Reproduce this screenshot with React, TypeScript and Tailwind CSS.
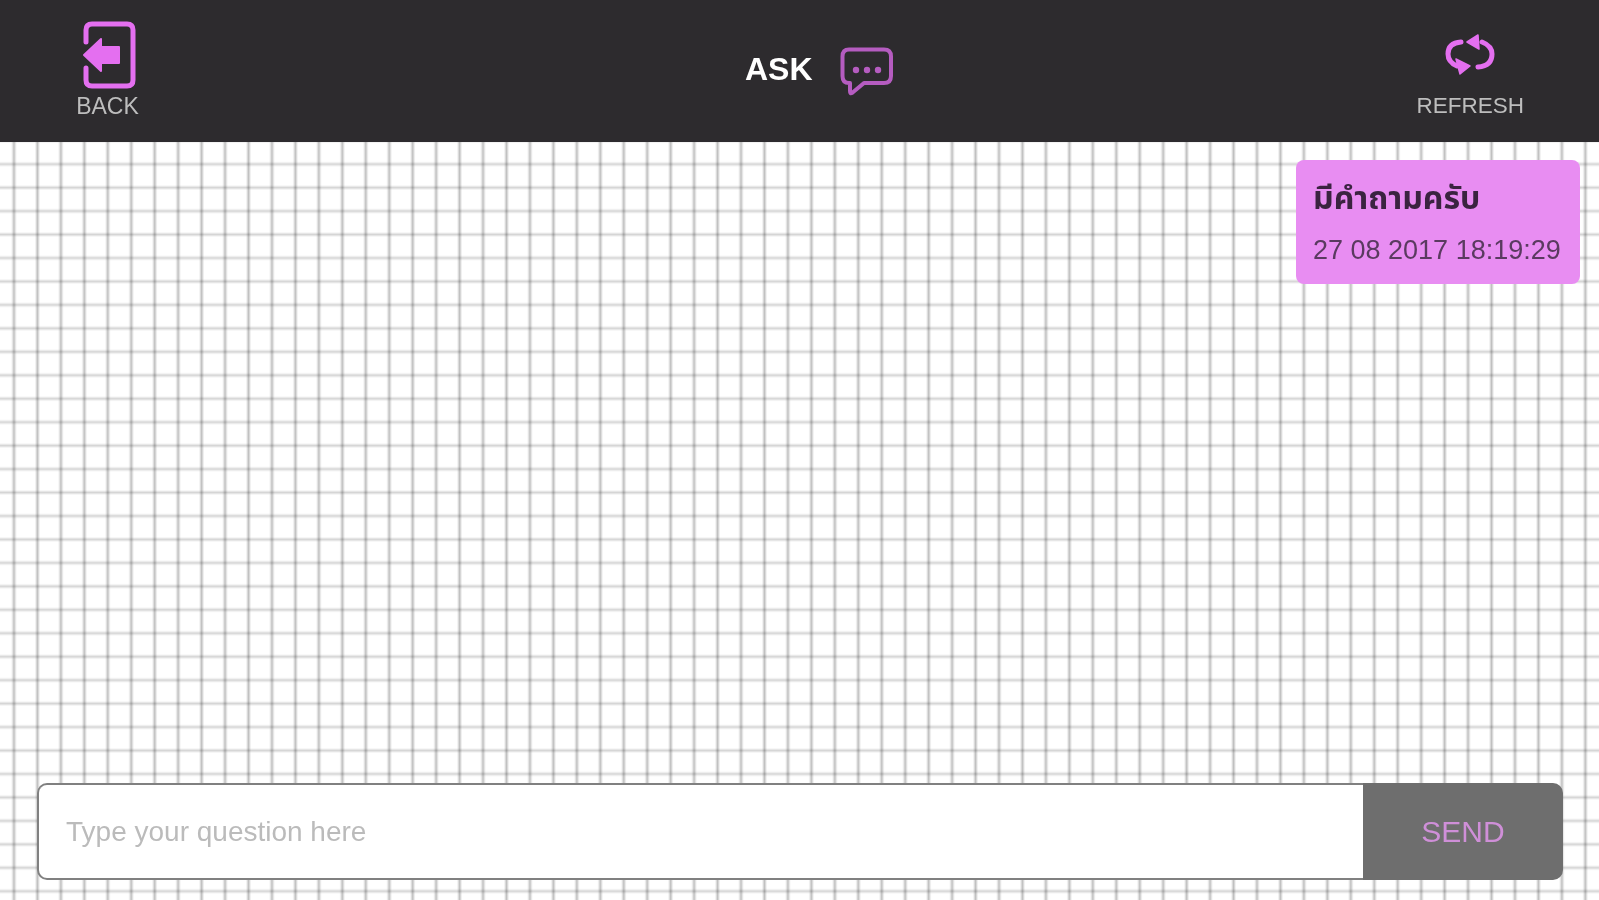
function BackIcon() {
  return (
    <svg width="56" height="70" viewBox="0 0 56 70" fill="none" className="block">
      <path d="M5 22 V10 Q5 4 11 4 H46 Q52 4 52 10 V60 Q52 66 46 66 H11 Q5 66 5 60 V48" stroke="#e46ff0" strokeWidth="5" strokeLinecap="round" />
      <path d="M3 35 L20 19 V27 H38 V43 H20 V51 Z" fill="#e46ff0" stroke="#e46ff0" strokeWidth="2" strokeLinejoin="round" />
    </svg>
  )
}

function ChatIcon() {
  return (
    <svg width="54" height="50" viewBox="0 0 54 50" fill="none" className="block">
      <path d="M9 2.5 H44 Q51 2.5 51 9.5 V29 Q51 36 44 36 H24 L12 46 Q10 47 10 44 V36 H9 Q2.5 36 2.5 29 V9.5 Q2.5 2.5 9 2.5 Z" stroke="#b55cc0" strokeWidth="4" strokeLinejoin="round" />
      <circle cx="16" cy="23" r="3.2" fill="#b55cc0" />
      <circle cx="27" cy="23" r="3.2" fill="#b55cc0" />
      <circle cx="38" cy="23" r="3.2" fill="#b55cc0" />
    </svg>
  )
}

function RefreshIcon() {
  return (
    <svg width="50" height="42" viewBox="0 0 50 42" fill="none" className="block">
      <path d="M16 8 Q3 9 3 20 Q3 28 12 32" stroke="#e46ff0" strokeWidth="5" strokeLinecap="round" />
      <path d="M33 33 Q47 32 47 20 Q47 12 37 8" stroke="#e46ff0" strokeWidth="5" strokeLinecap="round" />
      <path d="M11 25 L25 32 L15 40 Z" fill="#e46ff0" stroke="#e46ff0" strokeWidth="1.5" strokeLinejoin="round" />
      <path d="M33 1 L22 8 L34 15 Z" fill="#e46ff0" stroke="#e46ff0" strokeWidth="1.5" strokeLinejoin="round" />
    </svg>
  )
}

export default function App() {
  return (
    <div className="flex h-[900px] w-full flex-col overflow-hidden bg-white font-['Liberation_Sans',sans-serif] blur-[0.6px]">
      <header className="flex h-[142px] shrink-0 bg-[#2d2b2e]">
        <div className="w-[745px] pl-[75px] pt-[20px]">
          <div className="flex w-[65px] flex-col items-center">
            <div className="ml-[3px]">
              <BackIcon />
            </div>
            <span className="mt-[3px] text-[23px] leading-[26px] text-[#bdbdbd]">BACK</span>
          </div>
        </div>
        <div className="flex items-start gap-[27px] pt-[47px]">
          <h1 className="mt-[4px] text-[32px] leading-[36px] font-bold text-white">ASK</h1>
          <ChatIcon />
        </div>
        <div className="ml-auto flex flex-col items-center pr-[75px] pt-[34px]">
          <RefreshIcon />
          <span className="mt-[17px] text-[22.5px] leading-[26px] text-[#bdbdbd]">REFRESH</span>
        </div>
      </header>

      <main className="flex flex-1 flex-col justify-between bg-white bg-[linear-gradient(to_right,transparent_0px,rgba(0,0,0,0.25)_2.5px,transparent_5px),linear-gradient(to_bottom,transparent_0px,rgba(0,0,0,0.17)_2.5px,transparent_5px)] bg-[size:23.46px_23.46px] bg-[position:11.5px_19.7px]">
        <div className="flex justify-end pr-[19px] pt-[18px]">
          <div className="flex h-[124px] w-[284px] flex-col rounded-[8px] bg-[#e88df2] px-[17px] pt-[17px]">
            <p className="font-['Noto_Sans','Noto_Sans_Thai','Noto_Sans_CJK_SC',sans-serif] text-[32px] leading-[40px] font-bold text-[#3a2340]">มีคำถามครับ</p>
            <p className="mt-[17px] text-[27px] leading-[32px] whitespace-nowrap text-[#5a3a60]">27 08 2017 18:19:29</p>
          </div>
        </div>
        <div className="flex pl-[37px] pr-[36px] pb-[20px]">
          <div className="flex h-[97px] flex-1 items-center rounded-l-[10px] border-2 border-r-0 border-[#808080] bg-white pl-[27px]">
            <span className="text-[28px] text-[#bbbbbb]">Type your question here</span>
          </div>
          <button className="h-[97px] w-[200px] rounded-r-[10px] bg-[#6e6e6e] text-[30px] text-[#cf8fd8]">SEND</button>
        </div>
      </main>
    </div>
  )
}
